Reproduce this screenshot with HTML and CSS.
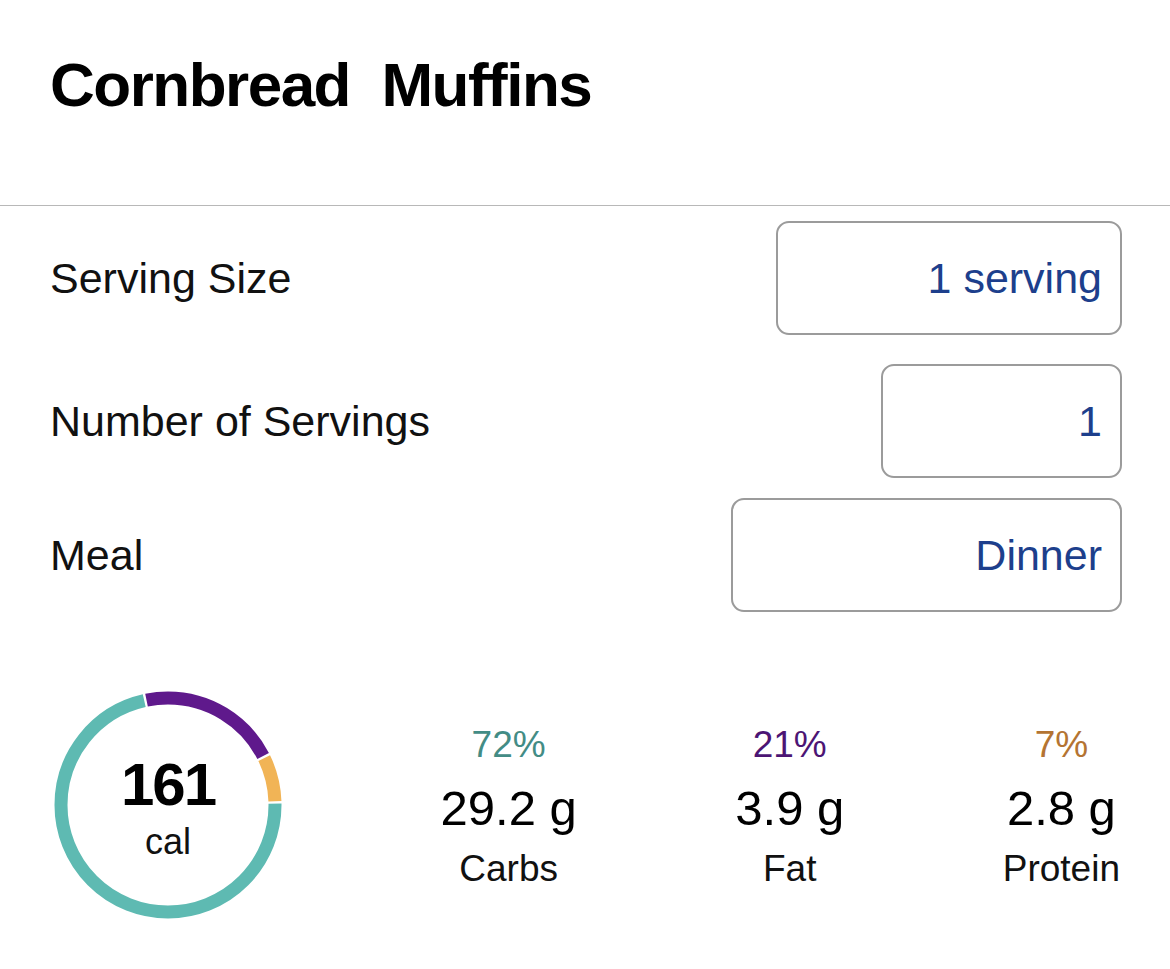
FILE: index.html
```html
<!DOCTYPE html>
<html lang="en">
<head>
    <meta charset="UTF-8">
    <meta name="viewport" content="width=device-width, initial-scale=1.0">
    <title>Cornbread Muffins</title>
    <link rel="stylesheet" href="styles.css">
</head>
<body>
    <div class="screen">
        <header class="title-bar">
            <h1>Cornbread&nbsp; Muffins</h1>
        </header>

        <div class="fields">
            <div class="field">
                <span class="field-label">Serving Size</span>
                <div class="field-box box-serving">1 serving</div>
            </div>
            <div class="field field-count">
                <span class="field-label">Number of Servings</span>
                <div class="field-box box-count">1</div>
            </div>
            <div class="field">
                <span class="field-label">Meal</span>
                <div class="field-box box-meal">Dinner</div>
            </div>
        </div>

        <div class="macros">
            <div class="donut">
                <svg class="donut-ring" width="228" height="228" viewBox="0 0 228 228">
                    <g transform="rotate(-90 114 114)">
                        <!-- purple: fat 21% -->
                        <circle class="seg seg-fat" cx="114" cy="114" r="107" pathLength="100"
                            stroke-dasharray="20.65 79.35" stroke-dashoffset="3.22"></circle>
                        <!-- orange: protein 7% -->
                        <circle class="seg seg-protein" cx="114" cy="114" r="107" pathLength="100"
                            stroke-dasharray="6.65 93.35" stroke-dashoffset="-17.78"></circle>
                        <!-- teal: carbs 72% -->
                        <circle class="seg seg-carbs" cx="114" cy="114" r="107" pathLength="100"
                            stroke-dasharray="71.65 28.35" stroke-dashoffset="-24.78"></circle>
                    </g>
                </svg>
                <div class="donut-center">
                    <div class="cal-num">161</div>
                    <div class="cal-unit">cal</div>
                </div>
            </div>

            <div class="macro">
                <div class="macro-pct pct-carbs">72%</div>
                <div class="macro-val">29.2 g</div>
                <div class="macro-name">Carbs</div>
            </div>
            <div class="macro">
                <div class="macro-pct pct-fat">21%</div>
                <div class="macro-val">3.9 g</div>
                <div class="macro-name">Fat</div>
            </div>
            <div class="macro">
                <div class="macro-pct pct-protein">7%</div>
                <div class="macro-val">2.8 g</div>
                <div class="macro-name">Protein</div>
            </div>
        </div>
    </div>
</body>
</html>
```

FILE: styles.css
```css
body {
    margin: 0;
    background: #fff;
    font-family: "Liberation Sans", Arial, sans-serif;
    color: #111;
}
.screen {
    width: 1170px;
}
.title-bar {
    height: 206px;
    box-sizing: border-box;
    padding: 48px 50px 0;
    border-bottom: 1px solid #b8b8b8;
}
h1 {
    margin: 0;
    font-size: 62px;
    line-height: 73px;
    font-weight: bold;
    letter-spacing: -1.5px;
    color: #000;
}
.fields {
    padding: 15px 48px 0 50px;
}
.field {
    display: flex;
    justify-content: space-between;
    align-items: center;
}
.field-count {
    margin: 29px 0 20px;
}
.field-label {
    font-size: 43px;
}
.field-box {
    height: 114px;
    box-sizing: border-box;
    border: 2px solid #9b9b9b;
    border-radius: 13px;
    padding: 0 18px;
    line-height: 110px;
    text-align: right;
    font-size: 43px;
    color: #1d3f8c;
}
.box-serving {
    width: 346px;
}
.box-count {
    width: 241px;
}
.box-meal {
    width: 391px;
}
.macros {
    margin-top: 80px;
    padding: 0 50px 0 54px;
    display: flex;
    justify-content: space-between;
    align-items: flex-start;
}
.donut {
    display: grid;
    width: 228px;
    height: 228px;
    margin-top: -1px;
}
.donut-ring,
.donut-center {
    grid-area: 1 / 1;
}
.seg {
    fill: none;
    stroke-width: 13;
}
.seg-carbs {
    stroke: #5ebab2;
}
.seg-fat {
    stroke: #5f198c;
}
.seg-protein {
    stroke: #f1b456;
}
.donut-center {
    display: flex;
    flex-direction: column;
    align-items: center;
    justify-content: center;
    padding-top: 6px;
}
.cal-num {
    font-size: 60px;
    font-weight: bold;
    letter-spacing: -2px;
    line-height: 64px;
    color: #000;
}
.cal-unit {
    margin-top: 4px;
    font-size: 36px;
    line-height: 42px;
}
.macro {
    margin-top: 31px;
    display: flex;
    flex-direction: column;
    align-items: center;
}
.macro-pct {
    font-size: 37px;
    line-height: 44px;
}
.pct-carbs {
    color: #438c85;
}
.pct-fat {
    color: #4c1574;
}
.pct-protein {
    color: #b47432;
}
.macro-val {
    margin-top: 12px;
    font-size: 49px;
    line-height: 58px;
    color: #000;
}
.macro-name {
    margin-top: 10px;
    font-size: 37px;
    line-height: 44px;
}
```
